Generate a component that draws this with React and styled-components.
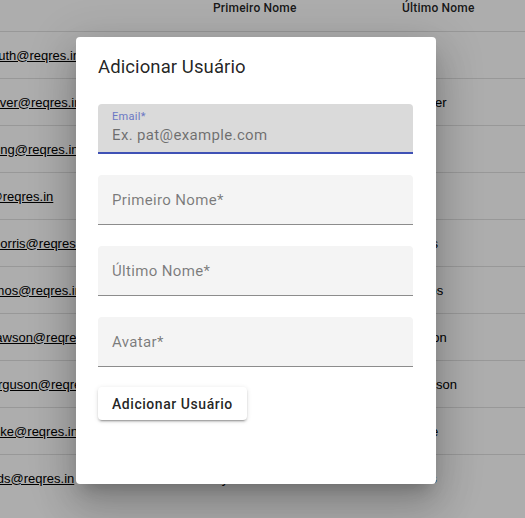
import React from 'react';
import styled, { createGlobalStyle } from 'styled-components';

const GlobalStyle = createGlobalStyle`
  html, body {
    margin: 0;
    padding: 0;
    overflow: hidden;
    background: #fff;
    font-family: Roboto, "Liberation Sans", Arial, sans-serif;
  }
`;

const Page = styled.div`
  position: relative;
  width: 100vw;
  height: 100vh;
  overflow: hidden;
  background: #fff;
`;

const Table = styled.div`
  width: 720px;
  margin-left: -56px;
`;

const Row = styled.div`
  display: grid;
  grid-template-columns: 269px 189px 1fr;
  align-items: ${(p) => (p.$head ? 'start' : 'center')};
  height: ${(p) => (p.$head ? '31px' : '46px')};
  border-bottom: 1px solid rgba(0, 0, 0, 0.12);

  &:last-child {
    border-bottom: none;
  }
`;

const HeadCell = styled.div`
  font-family: Roboto, sans-serif;
  font-size: 12px;
  font-weight: 500;
  line-height: 16px;
  letter-spacing: 0.2px;
  color: rgba(0, 0, 0, 0.87);
`;

const Cell = styled.div`
  font-family: "Liberation Sans", Arial, sans-serif;
  font-size: 13px;
  color: #000;
  white-space: nowrap;
`;

const EmailLink = styled.a`
  color: #000;
  text-decoration: underline;
`;

const Backdrop = styled.div`
  position: absolute;
  inset: 0;
  background: rgba(0, 0, 0, 0.32);
  display: flex;
  align-items: center;
  justify-content: center;
  padding-right: 13px;
  padding-top: 3px;
`;

const Dialog = styled.div`
  width: 360px;
  height: 447px;
  box-sizing: border-box;
  padding: 14px 23px 0 22px;
  background: #fff;
  border-radius: 4px;
  box-shadow: 0 11px 15px -7px rgba(0, 0, 0, 0.2),
    0 24px 38px 3px rgba(0, 0, 0, 0.14), 0 9px 46px 8px rgba(0, 0, 0, 0.12);
  display: flex;
  flex-direction: column;
`;

const Title = styled.h2`
  margin: 0 0 21px;
  font-family: Roboto, sans-serif;
  font-size: 18.5px;
  font-weight: 400;
  line-height: 32px;
  letter-spacing: 0.1px;
  color: rgba(0, 0, 0, 0.87);
`;

const Form = styled.div`
  display: flex;
  flex-direction: column;
  gap: 21px;
`;

const Field = styled.div`
  height: 50px;
  box-sizing: border-box;
  padding: 0 14px;
  border-radius: 4px 4px 0 0;
  background: ${(p) => (p.$focused ? '#dadada' : '#f4f4f4')};
  border-bottom: ${(p) => (p.$focused ? '2px solid #3f51b5' : '1px solid #8c8c8c')};
  display: flex;
  flex-direction: column;
  justify-content: ${(p) => (p.$focused ? 'flex-start' : 'center')};
  padding-top: ${(p) => (p.$focused ? '6px' : '0')};
`;

const FloatLabel = styled.span`
  font-size: 11px;
  line-height: 14px;
  letter-spacing: 0.3px;
  color: #6a77c4;
`;

const Placeholder = styled.span`
  margin-top: ${(p) => (p.$floated ? '1px' : '0')};
  font-size: 15px;
  line-height: 20px;
  letter-spacing: 0.35px;
  color: rgba(0, 0, 0, 0.5);
  white-space: nowrap;
`;

const Button = styled.button`
  align-self: flex-start;
  margin-top: 20px;
  height: 33px;
  padding: 0 14px;
  border: none;
  border-radius: 4px;
  background: #fff;
  font-family: Roboto, sans-serif;
  font-size: 14px;
  font-weight: 500;
  letter-spacing: 0.55px;
  color: rgba(0, 0, 0, 0.87);
  box-shadow: 0 3px 1px -2px rgba(0, 0, 0, 0.2), 0 2px 2px 0 rgba(0, 0, 0, 0.14),
    0 1px 5px 0 rgba(0, 0, 0, 0.12);
`;

const users = [
  ['george.bluth@reqres.in', 'George', 'Bluth'],
  ['janet.weaver@reqres.in', 'Janet', 'Weaver'],
  ['emma.wong@reqres.in', 'Emma', 'Wong'],
  ['eve.holt@reqres.in', 'Eve', 'Holt'],
  ['charles.morris@reqres.in', 'Charles', 'Morris'],
  ['tracey.ramos@reqres.in', 'Tracey', 'Ramos'],
  ['michael.lawson@reqres.in', 'Michael', 'Lawson'],
  ['lindsay.ferguson@reqres.in', 'Lindsay', 'Ferguson'],
  ['tobias.funke@reqres.in', 'Tobias', 'Funke'],
  ['byron.fields@reqres.in', 'Byron', 'Fields'],
];

const App = () => {
  return (
    <Page>
      <GlobalStyle />
      <Table>
        <Row $head>
          <HeadCell>Email</HeadCell>
          <HeadCell>Primeiro Nome</HeadCell>
          <HeadCell>Último Nome</HeadCell>
        </Row>
        {users.map(([email, first, last]) => (
          <Row key={email}>
            <Cell>
              <EmailLink href="#">{email}</EmailLink>
            </Cell>
            <Cell>{first}</Cell>
            <Cell>{last}</Cell>
          </Row>
        ))}
      </Table>
      <Backdrop>
        <Dialog>
          <Title>Adicionar Usuário</Title>
          <Form>
            <Field $focused>
              <FloatLabel>Email*</FloatLabel>
              <Placeholder $floated>Ex. pat@example.com</Placeholder>
            </Field>
            <Field>
              <Placeholder>Primeiro Nome*</Placeholder>
            </Field>
            <Field>
              <Placeholder>Último Nome*</Placeholder>
            </Field>
            <Field>
              <Placeholder>Avatar*</Placeholder>
            </Field>
          </Form>
          <Button>Adicionar Usuário</Button>
        </Dialog>
      </Backdrop>
    </Page>
  );
};

export default App;
